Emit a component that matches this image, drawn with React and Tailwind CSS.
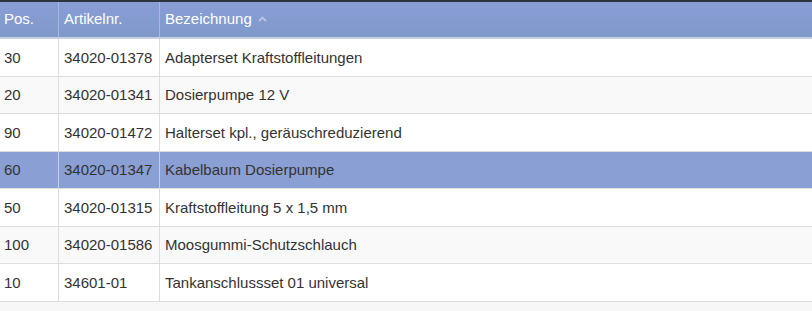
export default function App() {
  const rows = [
    ["30", "34020-01378", "Adapterset Kraftstoffleitungen"],
    ["20", "34020-01341", "Dosierpumpe 12 V"],
    ["90", "34020-01472", "Halterset kpl., geräuschreduzierend"],
    ["60", "34020-01347", "Kabelbaum Dosierpumpe"],
    ["50", "34020-01315", "Kraftstoffleitung 5 x 1,5 mm"],
    ["100", "34020-01586", "Moosgummi-Schutzschlauch"],
    ["10", "34601-01", "Tankanschlussset 01 universal"],
  ];
  return (
    <div className="w-[812px] h-[311px] overflow-hidden bg-white text-[15px] text-[#333]" style={{ fontFamily: '"Liberation Sans", Arial, sans-serif' }}>
      <div className="h-[2px] bg-[#2d3440]" />
      <div className="flex h-[35px] items-center bg-gradient-to-b from-[#8a9dd6] to-[#7f99ca] text-white border-b-2 border-[#c9d0e6] box-content">
        <div className="w-[59px] h-full flex items-center pl-[4px] border-r border-[#a9b8df]">Pos.</div>
        <div className="w-[101px] h-full flex items-center pl-[5px] border-r border-[#a9b8df]">Artikelnr.</div>
        <div className="flex-1 h-full flex items-center pl-[5px] gap-[6px]">
          Bezeichnung
          <svg width="9" height="6" viewBox="0 0 9 6" className="mt-[-1px]">
            <path d="M1 5 L4.5 1.5 L8 5" fill="none" stroke="#b9c4e6" strokeWidth="1.8" />
          </svg>
        </div>
      </div>
      {rows.map((r, i) => {
        const hl = i === 3;
        const bg = hl ? "bg-[#8a9fd4]" : i % 2 === 1 ? "bg-[#f9f9f9]" : "bg-white";
        return (
          <div key={i} className={`flex h-[37.5px] items-center border-b border-[#dddddd] ${bg}`}>
            <div className={`w-[59px] h-full flex items-center pl-[4px] pt-[1px] border-r ${hl ? "border-[#c5cfe9]" : "border-[#dddddd]"}`}>{r[0]}</div>
            <div className={`w-[101px] h-full flex items-center pl-[5px] pt-[1px] border-r ${hl ? "border-[#c5cfe9]" : "border-[#dddddd]"}`}>{r[1]}</div>
            <div className="flex-1 h-full flex items-center pl-[5px] pt-[1px]">{r[2]}</div>
          </div>
        );
      })}
      <div className="h-[20px] bg-[#f7f7f7]" />
    </div>
  );
}
